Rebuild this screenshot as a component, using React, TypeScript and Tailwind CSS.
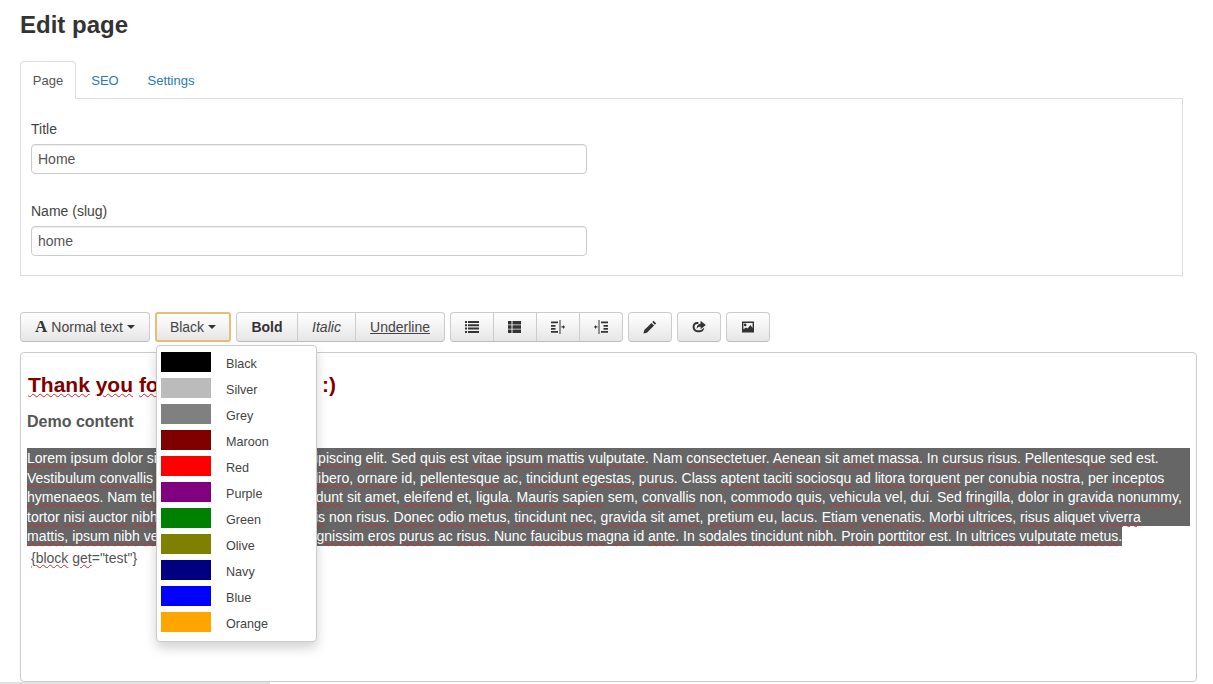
import { ReactNode } from 'react';

const COLORS = [
  { name: 'Black', hex: '#000000' },
  { name: 'Silver', hex: '#bbbbbb' },
  { name: 'Grey', hex: '#808080' },
  { name: 'Maroon', hex: '#800000' },
  { name: 'Red', hex: '#ff0000' },
  { name: 'Purple', hex: '#800080' },
  { name: 'Green', hex: '#008000' },
  { name: 'Olive', hex: '#808000' },
  { name: 'Navy', hex: '#000080' },
  { name: 'Blue', hex: '#0000ff' },
  { name: 'Orange', hex: '#ffa500' },
];

const LINES = [
  'Lorem ipsum dolor sit amet, a consectetuer adipiscing elit. Sed quis est vitae ipsum mattis vulputate. Nam consectetuer. Aenean sit amet massa. In cursus risus. Pellentesque sed est.',
  'Vestibulum convallis lorem ac tempus semper libero, ornare id, pellentesque ac, tincidunt egestas, purus. Class aptent taciti sociosqu ad litora torquent per conubia nostra, per inceptos',
  'hymenaeos. Nam tellus enim, blandit sed, tincidunt sit amet, eleifend et, ligula. Mauris sapien sem, convallis non, commodo quis, vehicula vel, dui. Sed fringilla, dolor in gravida nonummy,',
  'tortor nisi auctor nibh, eget faucibus tortor mollis non risus. Donec odio metus, tincidunt nec, gravida sit amet, pretium eu, lacus. Etiam venenatis. Morbi ultrices, risus aliquet viverra',
  'mattis, ipsum nibh vestibulum arcu nunc, vel dignissim eros purus ac risus. Nunc faucibus magna id ante. In sodales tincidunt nibh. Proin porttitor est. In ultrices vulputate metus.',
];

// words the browser spell checker left alone
const CORRECT = new Set(['dolor', 'sit', 'in', 'In', 'Sed', 'sed', 'est', 'non', 'per', 'ad', 'Nam', 'Class', 'et', 'id', 'ac', 'eu', 'a', 'vel', 'dui', 'sem', 'Nunc', ':)']);

function SpellLine({ text }: { text: string }) {
  return (
    <>
      {text.split(' ').map((token, i) => {
        const word = token.replace(/[.,]/g, '');
        const tail = token.slice(word.length);
        return (
          <span key={i}>
            {i > 0 && ' '}
            {CORRECT.has(word) ? word : <span className="underline decoration-wavy decoration-[#d42a2a] decoration-1">{word}</span>}
            {tail}
          </span>
        );
      })}
    </>
  );
}

function Btn({ className = '', children }: { className?: string; children: ReactNode }) {
  return (
    <div className={`flex h-[30px] items-center justify-center border border-[#ccc] border-b-[#bbb] bg-gradient-to-b from-white to-[#e6e6e6] text-[14px] text-[#333] ${className}`}>
      {children}
    </div>
  );
}

function Caret() {
  return <span className="ml-1 inline-block h-0 w-0 border-x-4 border-t-4 border-x-transparent border-t-[#333]" />;
}

const ICONS: Record<string, ReactNode> = {
  list: <path d="M0 1h2v2H0zM3 1h11v2H3zM0 4.3h2v2H0zM3 4.3h11v2H3zM0 7.6h2v2H0zM3 7.6h11v2H3zM0 10.9h2v2H0zM3 10.9h11v2H3z" />,
  thList: <path d="M0 1h3.5v3.4H0zM4.5 1H13v3.4H4.5zM0 5.3h3.5v3.4H0zM4.5 5.3H13v3.4H4.5zM0 9.6h3.5V13H0zM4.5 9.6H13V13H4.5z" />,
  indentLeft: <path d="M0 1.5h7v1.8H0zM0 5h4.5v1.8H0zM0 8h4.5v1.8H0zM0 11h7v1.8H0zM8.5 0h1v14h-1zM10.5 6.2h1.5V5l2 2-2 2V7.6h-1.5z" />,
  indentRight: <path d="M7 1.5h7v1.8H7zM9.5 5H14v1.8H9.5zM9.5 8H14v1.8H9.5zM7 11h7v1.8H7zM4.5 0h1v14h-1zM3.5 6.2H2V5L0 7l2 2V7.6h1.5z" />,
  pencil: <path d="M10.6 0.8 13.2 3.4 11.9 4.7 9.3 2.1zM8.5 2.9 11.1 5.5 3.9 12.7 0.4 13.6 1.3 10.1z" />,
  share: <path d="M8.6 0.8 13.8 5 8.6 9.2V6.8C6.6 6.8 5.4 7.4 4.6 9 4.6 6 6 4 8.6 3.5zM6.4 2H5C2.6 2 0.6 4 0.6 6.8c0 3.1 2.1 5.4 5 5.4h2.2c2.2 0 3.9-1.4 4.3-3.6v-.8L9.9 9.6c-.4.5-1.1.7-1.9.7H5.6C3.8 10.3 2.6 8.8 2.6 6.8 2.6 5 3.6 4 5 4h1.4z" />,
  picture: <path fillRule="evenodd" d="M1 1.5h12v11H1zM2.4 2.9v6.4L5 7.4l1.6 1 2.8-3.4 2.2 3V2.9zM4.2 3.6a1.3 1.3 0 1 1 0 2.6 1.3 1.3 0 0 1 0-2.6z" />,
};

function Icon({ name }: { name: string }) {
  return (
    <svg viewBox="0 0 14 14" className="h-[14px] w-[14px] fill-[#333]">
      {ICONS[name]}
    </svg>
  );
}

function Field({ label, value, className = '' }: { label: string; value: string; className?: string }) {
  return (
    <div className={className}>
      <div className="h-[20px] text-[14px] leading-[20px] text-[#444]">{label}</div>
      <div className="mt-[5px] flex h-[30px] w-[556px] items-center rounded-[4px] border border-[#ccc] bg-white px-[6px] text-[14px] text-[#555] shadow-[inset_0_1px_1px_rgba(0,0,0,0.075)]">
        {value}
      </div>
    </div>
  );
}

export default function App() {
  return (
    <div className="relative h-[684px] overflow-hidden bg-white font-['Liberation_Sans',Arial,sans-serif]">
      <div className="pl-[20px] pt-[10px]">
        <h1 className="text-[24px] font-bold leading-[30px] text-[#333]">Edit page</h1>

        {/* tabs */}
        <div className="mt-[21px] flex h-[37px] w-[1163px] text-[13px]">
          <div className="relative z-10 flex h-[38px] w-[56px] items-center justify-center rounded-t-[4px] border border-[#ddd] border-b-white bg-white pt-[1px] text-[#555]">Page</div>
          <div className="flex w-[58px] items-center justify-center pt-[2px] text-[#2a7ab0]">SEO</div>
          <div className="flex w-[74px] items-center justify-center pt-[2px] text-[#2a7ab0]">Settings</div>
        </div>
        <div className="h-[178px] w-[1163px] border border-[#ddd] px-[10px] pt-[20px]">
          <Field label="Title" value="Home" />
          <Field label="Name (slug)" value="home" className="mt-[27px]" />
        </div>

        {/* toolbar */}
        <div className="mt-[36px] flex gap-[5px]">
          <Btn className="w-[130px] rounded-[4px]">
            <span className="mr-[4px] font-['Liberation_Serif',serif] text-[17px] font-bold">A</span>
            <span className="text-[#444]">Normal text</span>
            <Caret />
          </Btn>
          <Btn className="w-[76px] rounded-[3px] !border-2 !border-[#e8bc7a] to-[#e3e3e3]">
            <span className="text-[#444]">Black</span>
            <Caret />
          </Btn>
          <div className="flex">
            <Btn className="w-[62px] rounded-l-[4px] font-bold">Bold</Btn>
            <Btn className="-ml-px w-[59px] italic text-[#444]">Italic</Btn>
            <Btn className="-ml-px w-[90px] rounded-r-[4px] underline text-[#444]">Underline</Btn>
          </div>
          <div className="flex">
            <Btn className="w-[44px] rounded-l-[4px]"><Icon name="list" /></Btn>
            <Btn className="-ml-px w-[44px]"><Icon name="thList" /></Btn>
            <Btn className="-ml-px w-[44px]"><Icon name="indentLeft" /></Btn>
            <Btn className="-ml-px w-[44px] rounded-r-[4px]"><Icon name="indentRight" /></Btn>
          </div>
          <Btn className="w-[44px] rounded-[4px]"><Icon name="pencil" /></Btn>
          <Btn className="w-[44px] rounded-[4px]"><Icon name="share" /></Btn>
          <Btn className="w-[44px] rounded-[4px]"><Icon name="picture" /></Btn>
        </div>

        {/* editor */}
        <div className="mt-[10px] h-[330px] w-[1177px] rounded-[4px] border border-[#ccc] px-[6px] pt-[17px] text-[14px] text-[#555]">
          <h2 className="ml-px text-[21px] font-bold leading-[30px] text-[#800000]">
            <SpellLine text="Thank you for using this tool :)" />
          </h2>
          <h3 className="mt-[11px] text-[16px] font-bold leading-[22px] text-[#555]">Demo content</h3>
          <div className="mt-[15px] whitespace-nowrap leading-[19.5px] text-white">
            {LINES.map((line, i) => (
              <div key={i} className={`bg-[#666] ${i === 4 ? 'w-fit' : ''}`}>
                <span className="relative top-px">
                  <SpellLine text={line} />
                </span>
              </div>
            ))}
          </div>
          <div className="mt-[2px] pl-[4px] leading-[20px]">
            <span className="underline decoration-wavy decoration-[#d42a2a] decoration-1">{'{block'}</span>{' '}
            <span className="underline decoration-wavy decoration-[#d42a2a] decoration-1">get</span>="test"{'}'}
          </div>
        </div>
      </div>

      {/* colour menu */}
      <div className="absolute left-[156px] top-[345px] flex h-[297px] w-[161px] flex-col gap-[6px] rounded-[4px] border border-[#ccc] bg-white px-[4px] pt-[6px] shadow-[0_6px_12px_rgba(0,0,0,0.175)]">
        {COLORS.map((c) => (
          <div key={c.name} className="flex h-[20px] items-center gap-[15px] text-[12.6px] text-[#444]">
            <span className="h-[20px] w-[50px] shrink-0" style={{ backgroundColor: c.hex }} />
            <span className="relative top-[2px]">{c.name}</span>
          </div>
        ))}
      </div>

      {/* page scrollbar remnant */}
      <div className="absolute bottom-0 left-0 h-[2px] w-[270px] bg-[#e2e2e2]" />
    </div>
  );
}
